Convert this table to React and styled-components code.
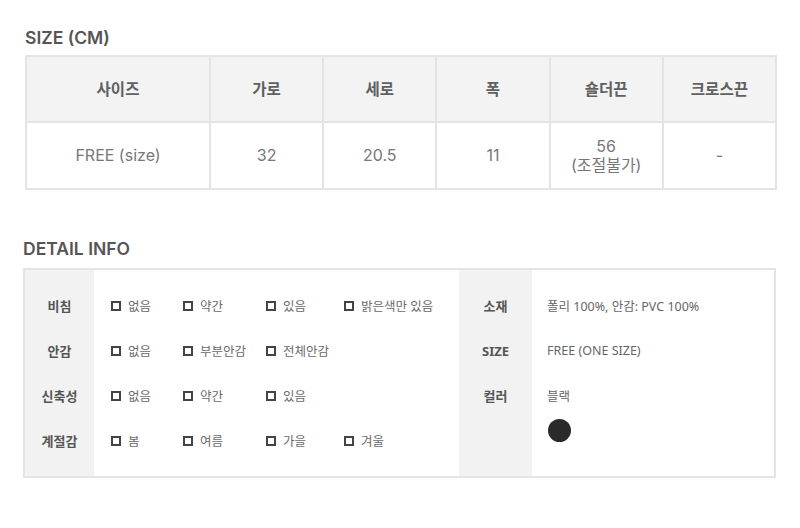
import React from "react";
import styled, { createGlobalStyle } from "styled-components";

const GlobalStyle = createGlobalStyle`
  html, body { margin: 0; padding: 0; background: #fff; }
  body { font-family: "Noto Sans", "Noto Sans CJK KR", sans-serif; }
`;

const Page = styled.div`
  width: 800px;
  height: 528px;
  padding: 27px 23px 0 23px;
  box-sizing: border-box;
`;

const Section = styled.section`
  margin-left: ${(p) => p.$indent || 0}px;
  margin-bottom: ${(p) => p.$after || 0}px;
`;

const Title = styled.h2`
  margin: 0 0 ${(p) => p.$gap}px 0;
  font-family: Inter, "Noto Sans CJK KR", sans-serif;
  font-size: 17.5px;
  line-height: 22px;
  font-weight: 600;
  color: #555;
`;

const SizeGrid = styled.div`
  display: grid;
  grid-template-columns: 182px repeat(5, 1fr);
  grid-template-rows: 64px 65px;
  gap: 2px;
  padding: 2px;
  width: 752px;
  box-sizing: border-box;
  background: #e4e4e4;
`;

const SizeCell = styled.div`
  display: flex;
  flex-direction: column;
  align-items: center;
  justify-content: center;
  text-align: center;
  background: ${(p) => (p.$head ? "#f3f3f3" : "#fff")};
  color: ${(p) => (p.$head ? "#606060" : "#777")};
  font-family: Inter, "Noto Sans CJK KR", sans-serif;
  font-size: ${(p) => (p.$head ? 15.5 : 16)}px;
  font-weight: ${(p) => (p.$head ? 700 : 400)};
  line-height: 19px;
`;

const DetailBox = styled.div`
  display: flex;
  width: 753px;
  height: 210px;
  box-sizing: border-box;
  border: 2px solid #e4e4e4;
`;

const Half = styled.div`
  display: flex;
  width: ${(p) => p.$w}px;
`;

const LabelCol = styled.div`
  width: ${(p) => p.$w}px;
  flex-shrink: 0;
  background: #f2f2f2;
  padding: 13px 0;
  box-sizing: border-box;
`;

const ValueCol = styled.div`
  flex: 1;
  padding: 13px 0 13px ${(p) => p.$pad}px;
  box-sizing: border-box;
`;

const Label = styled.div`
  height: 45px;
  display: flex;
  align-items: center;
  justify-content: center;
  font-size: 13px;
  font-weight: 700;
  color: #555;
`;

const OptionRow = styled.div`
  height: 45px;
  display: grid;
  grid-template-columns: 72px 83px 78px auto;
  align-items: center;
`;

const Option = styled.div`
  display: flex;
  align-items: center;
  gap: 7px;
  font-size: 12.5px;
  color: #6a6a6a;
  white-space: nowrap;
`;

const Box = styled.span`
  width: 10px;
  height: 10px;
  box-sizing: border-box;
  border: 2px solid #444;
  flex-shrink: 0;
`;

const Value = styled.div`
  height: 45px;
  display: flex;
  align-items: center;
  font-size: 12.5px;
  color: #666;
`;

const Swatch = styled.div`
  width: 23px;
  height: 23px;
  border-radius: 50%;
  background: #2a2a2a;
  margin: 1px 0 0 1px;
`;

const sizeHead = ["사이즈", "가로", "세로", "폭", "숄더끈", "크로스끈"];

const options = [
  ["비침", ["없음", "약간", "있음", "밝은색만 있음"]],
  ["안감", ["없음", "부분안감", "전체안감"]],
  ["신축성", ["없음", "약간", "있음"]],
  ["계절감", ["봄", "여름", "가을", "겨울"]],
];

export default function App() {
  return (
    <>
      <GlobalStyle />
      <Page>
        <Section $indent={2} $after={48}>
          <Title $gap={6}>SIZE (CM)</Title>
          <SizeGrid>
            {sizeHead.map((h) => (
              <SizeCell key={h} $head>
                {h}
              </SizeCell>
            ))}
            <SizeCell>FREE (size)</SizeCell>
            <SizeCell>32</SizeCell>
            <SizeCell>20.5</SizeCell>
            <SizeCell>11</SizeCell>
            <SizeCell>
              <span>56</span>
              <span>(조절불가)</span>
            </SizeCell>
            <SizeCell>-</SizeCell>
          </SizeGrid>
        </Section>
        <Section>
          <Title $gap={8}>DETAIL INFO</Title>
          <DetailBox>
            <Half $w={434}>
              <LabelCol $w={69}>
                {options.map(([l]) => (
                  <Label key={l}>{l}</Label>
                ))}
              </LabelCol>
              <ValueCol $pad={17}>
                {options.map(([l, opts]) => (
                  <OptionRow key={l}>
                    {opts.map((o) => (
                      <Option key={o}>
                        <Box />
                        {o}
                      </Option>
                    ))}
                  </OptionRow>
                ))}
              </ValueCol>
            </Half>
            <Half $w={315}>
              <LabelCol $w={73}>
                <Label>소재</Label>
                <Label>SIZE</Label>
                <Label>컬러</Label>
              </LabelCol>
              <ValueCol $pad={15}>
                <Value>폴리 100%, 안감: PVC 100%</Value>
                <Value>FREE (ONE SIZE)</Value>
                <Value>블랙</Value>
                <Swatch />
              </ValueCol>
            </Half>
          </DetailBox>
        </Section>
      </Page>
    </>
  );
}
